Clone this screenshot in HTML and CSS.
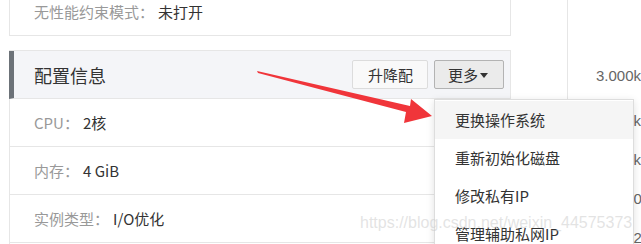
FILE: index.html
```html
<!DOCTYPE html>
<html lang="zh-CN">
<head>
<meta charset="utf-8">
<title>配置信息</title>
<link rel="stylesheet" href="styles.css">
</head>
<body>
<div class="page">
  <div class="main">
    <section class="box box-top">
      <div class="row"><span class="label">无性能约束模式：</span><span class="value">未打开</span></div>
    </section>
    <section class="box box-config">
      <div class="head">
        <h2 class="title">配置信息</h2>
        <div class="actions">
          <button class="btn">升降配</button>
          <div class="more">
            <button class="btn btn-active">更多<span class="caret"></span></button>
            <ul class="menu">
              <li class="menu-item is-hover">更换操作系统</li>
              <li class="menu-item">重新初始化磁盘</li>
              <li class="menu-item">修改私有IP</li>
              <li class="menu-item">管理辅助私网IP</li>
            </ul>
          </div>
        </div>
      </div>
      <div class="row"><span class="label">CPU：</span><span class="value">2核</span></div>
      <div class="row"><span class="label">内存：</span><span class="value">4 GiB</span></div>
      <div class="row"><span class="label">实例类型：</span><span class="value">I/O优化</span></div>
      <div class="row row-empty"></div>
    </section>
  </div>
  <aside class="side">
    <div class="side-row side-first">3.000k</div>
    <div class="side-row">3.000k</div>
    <div class="side-row">3.000k</div>
    <div class="side-row">1.0000</div>
    <div class="side-row">1.0002</div>
  </aside>
</div>
<svg class="arrow" width="641" height="244" viewBox="0 0 641 244" xmlns="http://www.w3.org/2000/svg">
  <polygon points="257,71 410,106 411,99 432,116 404,123 406,112 258,73" fill="#f0353a"/>
</svg>
<div class="watermark">https://blog.csdn.net/weixin_44575373</div>
</body>
</html>
```
FILE: styles.css
```css
* { box-sizing: border-box; }

html, body {
  margin: 0;
  padding: 0;
  background: #fff;
  overflow: hidden;
}

body {
  font-family: "Noto Sans CJK SC", "Noto Sans", sans-serif;
  font-size: 15px;
  color: #333;
  position: relative;
  width: 641px;
  height: 244px;
}

.page {
  display: flex;
  margin-top: -12px;
  padding-left: 9px;
}

.main {
  width: 502px;
  flex: none;
}

.box {
  border-left: 1px solid #e6e6e6;
  border-right: 1px solid #e6e6e6;
}

.box-config {
  margin-top: 14px;
  border-top: 1px solid #e6e6e6;
}

.row {
  height: 48px;
  border-bottom: 1px solid #e6e6e6;
  display: flex;
  align-items: center;
  padding-left: 24px;
  white-space: nowrap;
}

.label { color: #999; }
.value { color: #333; margin-left: 4px; }

.head {
  height: 48px;
  margin-left: -1px;
  border-left: 5px solid #6c7278;
  border-bottom: 1px solid #e6e6e6;
  background: #f4f5f8;
  display: flex;
  align-items: center;
  justify-content: space-between;
  padding-left: 20px;
  padding-right: 6px;
}

.title {
  margin: 0;
  font-size: 18px;
  font-weight: normal;
  color: #333;
}

.actions {
  display: flex;
  align-items: center;
  gap: 6px;
}

.btn {
  height: 29px;
  padding: 0 14px 0 15px;
  font-family: inherit;
  font-size: 15px;
  color: #333;
  background: #f9f9f9;
  border: 1px solid #dcdcdc;
  border-radius: 2px;
  display: flex;
  align-items: center;
  line-height: 1;
}

.btn-active {
  background: #ebebeb;
  border-color: #b3b3b3;
  padding: 0 15px 0 13px;
}

.caret {
  width: 0;
  height: 0;
  margin-left: 2px;
  margin-top: 2px;
  border-left: 4px solid transparent;
  border-right: 4px solid transparent;
  border-top: 5px solid #333;
}

.more {
  position: relative;
}

.menu {
  position: absolute;
  top: calc(100% + 10px);
  left: 0;
  width: 200px;
  margin: 0;
  padding: 1px 0;
  list-style: none;
  background: #fff;
  border: 1px solid #dddddd;
  box-shadow: 0 2px 8px rgba(0, 0, 0, 0.12);
  z-index: 5;
}

.menu-item {
  height: 38px;
  line-height: 38px;
  padding-left: 20px;
  font-size: 15px;
  color: #333;
  white-space: nowrap;
}

.menu-item.is-hover {
  background: #f5f5f5;
}

.side {
  margin-left: 56px;
  flex: 1;
  border-left: 1px solid #e6e6e6;
  padding-left: 28px;
  padding-top: 68px;
  height: 280px;
  font-family: "Liberation Sans", Arial, sans-serif;
  font-size: 15px;
  color: #666;
  white-space: nowrap;
  overflow: hidden;
}

.side-row {
  line-height: 39px;
  height: 39px;
}

.side-first {
  margin-bottom: 6px;
}

.arrow {
  position: absolute;
  top: 0;
  left: 0;
  pointer-events: none;
  z-index: 10;
}

.watermark {
  position: absolute;
  left: 360px;
  top: 214px;
  font-family: "Liberation Sans", Arial, sans-serif;
  font-size: 16px;
  line-height: 18px;
  color: rgba(200, 200, 200, 0.5);
  white-space: nowrap;
  pointer-events: none;
  z-index: 20;
}
```
